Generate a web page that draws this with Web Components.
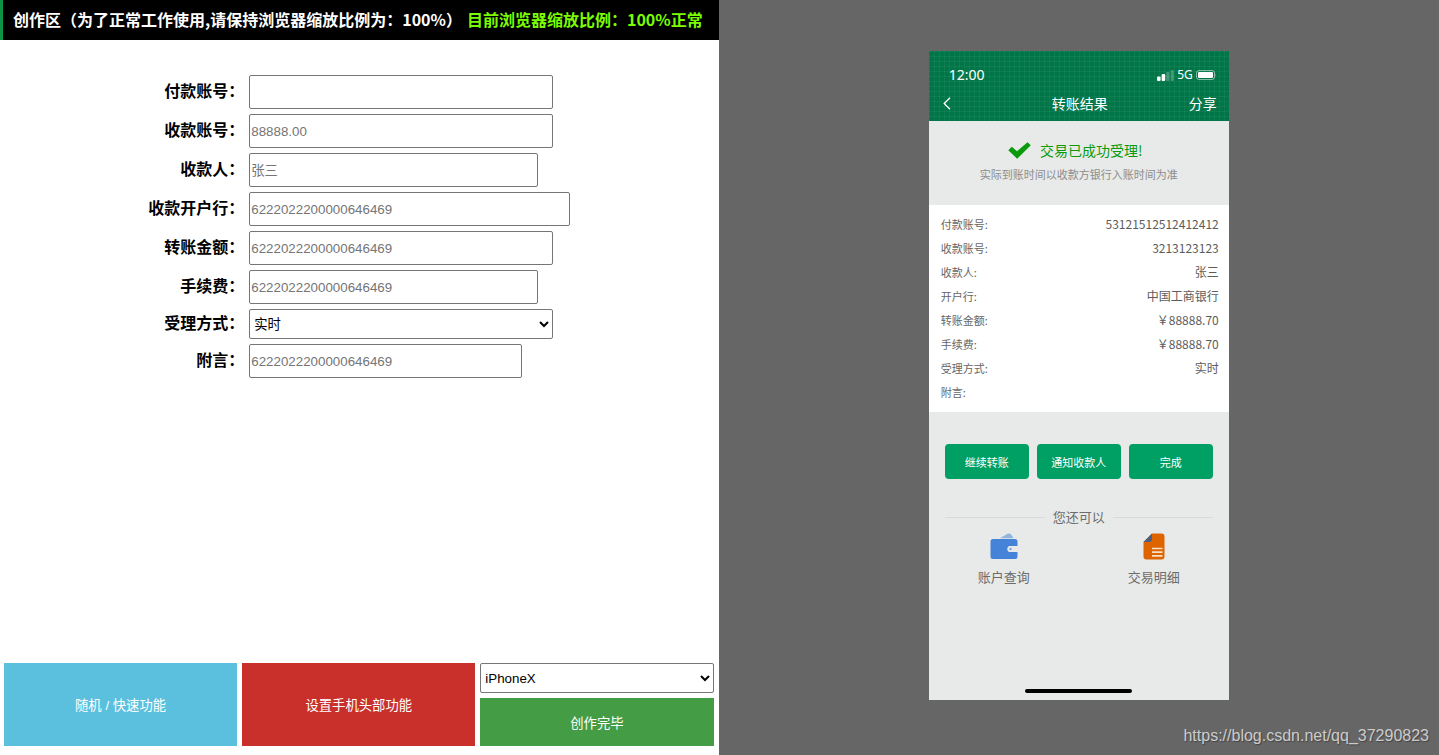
<!DOCTYPE html>
<html lang="zh-CN">
<head>
<meta charset="utf-8">
<title>创作区</title>
<style>
html, body { margin: 0; height: 100%; }
body { font-family: "Noto Sans CJK SC", sans-serif; background: #fff; color: #000; }
</style>
</head>
<body>
<app-shell>
  <editor-panel slot="editor">
    <status-header slot="header">
      创作区（为了正常工作使用,请保持浏览器缩放比例为：100%）
      <span slot="state">目前浏览器缩放比例：100%正常</span>
    </status-header>
    <form-field label="付款账号" size="m"></form-field>
    <form-field label="收款账号" size="m" hint="88888.00"></form-field>
    <form-field label="收款人" size="s" hint="张三"></form-field>
    <form-field label="收款开户行" size="l" hint="6222022200000646469"></form-field>
    <form-field label="转账金额" size="m" hint="6222022200000646469"></form-field>
    <form-field label="手续费" size="s" hint="6222022200000646469"></form-field>
    <form-field label="受理方式" size="m" options="实时"></form-field>
    <form-field label="附言" size="xs" hint="6222022200000646469"></form-field>
    <action-bar slot="actions"></action-bar>
  </editor-panel>
  <phone-preview slot="preview">
    <phone-header slot="header"></phone-header>
    <result-banner slot="banner"></result-banner>
    <detail-row label="付款账号:">53121512512412412</detail-row>
    <detail-row label="收款账号:">3213123123</detail-row>
    <detail-row label="收款人:">张三</detail-row>
    <detail-row label="开户行:">中国工商银行</detail-row>
    <detail-row label="转账金额:">￥88888.70</detail-row>
    <detail-row label="手续费:">￥88888.70</detail-row>
    <detail-row label="受理方式:">实时</detail-row>
    <detail-row label="附言:"></detail-row>
    <result-actions slot="footer"></result-actions>
  </phone-preview>
</app-shell>

<script>
function define(name, html, setup) {
  const template = document.createElement('template');
  template.innerHTML = html;
  customElements.define(name, class extends HTMLElement {
    constructor() {
      super();
      this.attachShadow({ mode: 'open' }).append(template.content.cloneNode(true));
    }
    connectedCallback() { if (setup) setup(this, this.shadowRoot); }
  });
}

define('app-shell', `
<style>
:host { display: grid; grid-template-columns: calc(50% - 1px) minmax(0, 1fr); min-height: 100vh; position: relative; }
::slotted(*) { min-width: 0; }
.mark { position: absolute; right: 10px; bottom: 9px; font: 16px/20px "Liberation Sans", sans-serif; color: #ccc; text-decoration: none; text-shadow: 1px 1px 1px #444; }
</style>
<slot name="editor"></slot>
<slot name="preview"></slot>
<a class="mark" href="https://blog.csdn.net/qq_37290823">https://blog.csdn.net/qq_37290823</a>`);

define('editor-panel', `
<style>
:host { display: flex; flex-direction: column; background: #fff; }
form { flex: 1; display: flex; flex-direction: column; gap: 5px; padding: 35px 0; }
</style>
<slot name="header"></slot>
<form><slot></slot></form>
<slot name="actions"></slot>`);

define('status-header', `
<style>
:host { display: block; background: #000; border-left: 3px solid #0c9344; }
h1 { margin: 0; padding: 0 10px 2px; display: flex; gap: 5px; font-size: 16px; line-height: 38px; font-weight: 700; color: #fff; white-space: nowrap; }
.state { color: #7cfc00; }
</style>
<h1><span><slot></slot></span><span class="state"><slot name="state"></slot></span></h1>`);

define('form-field', `
<style>
:host { display: grid; grid-template-columns: 34% minmax(0, 1fr); column-gap: 5px; align-items: center; --w: 304px; }
:host([size="xs"]) { --w: 273px; }
:host([size="s"]) { --w: 289px; }
:host([size="l"]) { --w: 321px; }
label { padding-bottom: 4px; font-size: 16px; line-height: 24px; font-weight: 700; text-align: right; white-space: nowrap; }
input, select { box-sizing: border-box; width: var(--w); max-width: 100%; border: 1px solid #767676; border-radius: 2px; background: #fff; font-family: "Liberation Sans", "Noto Sans CJK SC", sans-serif; }
input { height: 34px; padding: 1px; }
input::placeholder { color: #757575; }
select { height: 30px; padding: 0; color: #000; }
</style>
<label for="control"></label>`, (host, root) => {
  const label = root.querySelector('label');
  if (label.textContent) return;
  label.textContent = host.getAttribute('label') + '：';
  const options = host.getAttribute('options');
  const control = document.createElement(options ? 'select' : 'input');
  control.id = 'control';
  if (options) options.split(',').forEach(o => control.add(new Option(o)));
  else { control.type = 'text'; control.placeholder = host.getAttribute('hint') || ''; }
  root.append(control);
});

define('action-bar', `
<style>
:host { display: grid; grid-template-columns: repeat(3, minmax(0, 1fr)); gap: 5px; padding: 0 5px 9px 4px; }
button { border: 0; padding: 0; color: #fff; font-family: "Liberation Sans", "Noto Sans CJK SC", sans-serif; }
.random { background: #5bc0de; }
.phone { background: #c9302c; }
.done { background: #449d44; height: 48px; }
.side { display: flex; flex-direction: column; gap: 5px; }
select { height: 30px; padding: 0; border: 1px solid #767676; border-radius: 2px; background: #fff; color: #000; font-family: "Liberation Sans", sans-serif; }
</style>
<button class="random" type="button">随机 / 快速功能</button>
<button class="phone" type="button">设置手机头部功能</button>
<div class="side">
  <select aria-label="手机型号"><option>iPhoneX</option></select>
  <button class="done" type="button">创作完毕</button>
</div>`);

define('phone-preview', `
<style>
:host { display: flex; align-items: center; justify-content: center; background: #666; padding-bottom: 4px; }
.screen { width: 300px; min-height: 649px; background: #e8eae9; display: flex; flex-direction: column; }
.details { background: #fff; padding: 7px 10px 8px 12px; }
.home { width: 107px; height: 4px; border-radius: 2px; background: #000; margin: auto auto 7px; }
</style>
<div class="screen">
  <slot name="header"></slot>
  <slot name="banner"></slot>
  <div class="details"><slot></slot></div>
  <slot name="footer"></slot>
  <div class="home"></div>
</div>`);

define('phone-header', `
<style>
:host { display: block; height: 70px; color: #fff; background: repeating-linear-gradient(90deg, #ffffff0d 0 1px, transparent 1px 5px), repeating-linear-gradient(#ffffff0d 0 1px, transparent 1px 5px), #007547; }
.status { display: flex; justify-content: space-between; align-items: center; height: 20px; padding: 14px 12px 0 20px; }
.time { font: 14px/20px "Noto Sans", sans-serif; }
.net { display: flex; align-items: center; gap: 3px; font: 12px/20px "Noto Sans", sans-serif; }
.nav { display: grid; grid-template-columns: 1fr auto 1fr; align-items: center; padding: 8px 12px 0 14px; font-size: 14px; line-height: 20px; }
.nav span:last-child { text-align: right; }
button { justify-self: start; border: 0; padding: 0; background: none; display: flex; }
svg { display: block; }
</style>
<div class="status">
  <span class="time">12:00</span>
  <span class="net">
    <svg width="17" height="11" viewBox="0 0 17 11" fill="#fff"><rect y="6.500" width="3.600" height="4.500" rx="1"/><rect x="4.600" y="4" width="3.600" height="7" rx="1"/><rect x="9.200" y="2" width="3.200" height="9" rx="1" opacity=".25"/><rect x="13.700" width="3.200" height="11" rx="1" opacity=".25"/></svg>
    5G
    <svg width="21" height="10" viewBox="0 0 21 10"><rect x=".5" y=".5" width="18" height="9" rx="2.500" fill="none" stroke="#fff" opacity=".5"/><rect x="2" y="2" width="15" height="6" rx="1" fill="#fff"/><path d="M19.500 3.500q1.500 1.500 0 3z" fill="#fff" opacity=".5"/></svg>
  </span>
</div>
<div class="nav">
  <button type="button" aria-label="返回"><svg width="8" height="13" viewBox="0 0 8 13"><path d="M7 .8 1.200 6.500 7 12.200" fill="none" stroke="#fff" stroke-width="1.300"/></svg></button>
  <span>转账结果</span>
  <span>分享</span>
</div>`);

define('result-banner', `
<style>
:host { display: block; height: 66px; padding-top: 18px; text-align: center; }
.ok { display: flex; justify-content: center; align-items: center; gap: 9px; padding-right: 7px; color: #099b09; font-size: 14px; line-height: 22px; }
p { margin: 0; font-size: 11px; line-height: 26px; color: #8b8c8c; }
</style>
<div class="ok"><svg width="23" height="17" viewBox="0 0 23 17"><path d="M.3 8.300 3.800 4.800 9 9.300 19.500.300 22.800 3.300 9.200 16.800z" fill="#099b09"/></svg><span>交易已成功受理!</span></div>
<p>实际到账时间以收款方银行入账时间为准</p>`);

define('detail-row', `
<style>
:host { display: flex; justify-content: space-between; line-height: 24px; color: #666; }
.label { font-size: 11px; }
.value { font-size: 12px; color: #5c5c5c; }
</style>
<span class="label"></span><span class="value"><slot></slot></span>`, (host, root) => {
  root.querySelector('.label').textContent = host.getAttribute('label');
});

define('result-actions', `
<style>
:host { display: block; padding: 32px 16px 0; color: #6c6c6c; font-size: 13px; }
.buttons { display: grid; grid-template-columns: repeat(3, 1fr); gap: 8px; }
.buttons button { height: 35px; border: 0; border-radius: 4px; padding: 0; background: #009f63; color: #fff; font: 11px/20px "Noto Sans CJK SC", sans-serif; }
.more { display: flex; align-items: center; gap: 8px; margin-top: 28px; line-height: 20px; }
.more::before, .more::after { content: ""; flex: 1; height: 1px; background: #d8dada; }
.links { display: grid; grid-template-columns: 1fr 1fr; margin: 6px -16px 0; }
.links a { display: flex; flex-direction: column; align-items: center; gap: 7px; color: inherit; text-decoration: none; line-height: 20px; }
</style>
<div class="buttons"><button type="button">继续转账</button><button type="button">通知收款人</button><button type="button">完成</button></div>
<div class="more">您还可以</div>
<div class="links">
  <a href="#"><svg width="28" height="27" viewBox="0 0 28 27"><path d="M10 5.200 17.500.8q2-1 3.500.500l2.500 3.900z" fill="#92b5e0"/><path d="M3 6h22q2.500 0 2.500 2.500V13h-7a3 3 0 0 0 0 6h7v4.500Q27.500 26 25 26H3Q.5 26 .5 23.500v-15Q.5 6 3 6z" fill="#4583d8"/><circle cx="20.500" cy="16" r="3" fill="#e8eae9"/><circle cx="20.500" cy="16" r="1.200" fill="#7aa5df"/></svg>账户查询</a>
  <a href="#"><svg width="22" height="27" viewBox="0 0 22 27"><path d="M9 .5h9.500q3 0 3 3v20q0 3-3 3h-15q-3 0-3-3V9z" fill="#de6400"/><path d="M9 .5V6q0 3-3 3H.5z" fill="#4c6083"/><path d="M9 15.500h10.500M9 19.200h10.500M9 22.900h10.500" stroke="#f7e0c8" stroke-width="1.700"/></svg>交易明细</a>
</div>`);
</script>
</body>
</html>
